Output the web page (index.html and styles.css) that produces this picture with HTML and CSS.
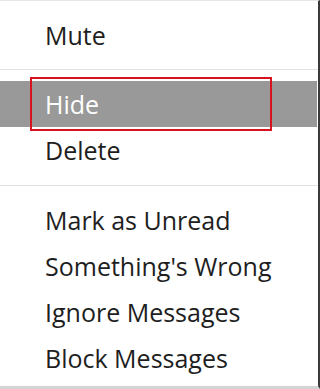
FILE: index.html
```html
<!DOCTYPE html>
<html>
<head>
<meta charset="utf-8">
<link rel="stylesheet" href="styles.css">
</head>
<body>
<div class="menu">
  <div class="section first">
    <div class="item">Mute</div>
  </div>
  <div class="sep"></div>
  <div class="section">
    <div class="item active">Hide</div>
    <div class="item">Delete</div>
  </div>
  <div class="sep"></div>
  <div class="section last">
    <div class="item">Mark as Unread</div>
    <div class="item">Something's Wrong</div>
    <div class="item">Ignore Messages</div>
    <div class="item">Block Messages</div>
  </div>
  <div class="highlight-box"></div>
</div>
</body>
</html>
```
FILE: styles.css
```css
html, body {
  margin: 0;
  padding: 0;
  background: #ffffff;
}
.menu {
  position: relative;
  width: 320px;
  height: 389px;
  box-sizing: border-box;
  background: #ffffff;
  border-top: 1px solid #e6e6e6;
  border-right: 2px solid #3a3a3a;
  border-bottom: 3px solid #d4d4d4;
  font-family: "Open Sans", "Noto Sans", sans-serif;
  color: #1e1e1e;
}
.section {
  padding: 11px 0 12px;
}
.section.first {
  padding: 11px 0 11px;
}
.section.last {
  padding: 11px 0 0;
}
.sep {
  height: 1px;
  background: #e3e3e3;
}
.item {
  height: 46px;
  line-height: 46px;
  padding-left: 45px;
  font-size: 25px;
  white-space: nowrap;
}
.item.active {
  background: #999999;
  color: #ffffff;
  margin-right: 1px;
}
.highlight-box {
  position: absolute;
  left: 30px;
  top: 76px;
  width: 242px;
  height: 54px;
  box-sizing: border-box;
  border: 2px solid #d8131b;
}
```
